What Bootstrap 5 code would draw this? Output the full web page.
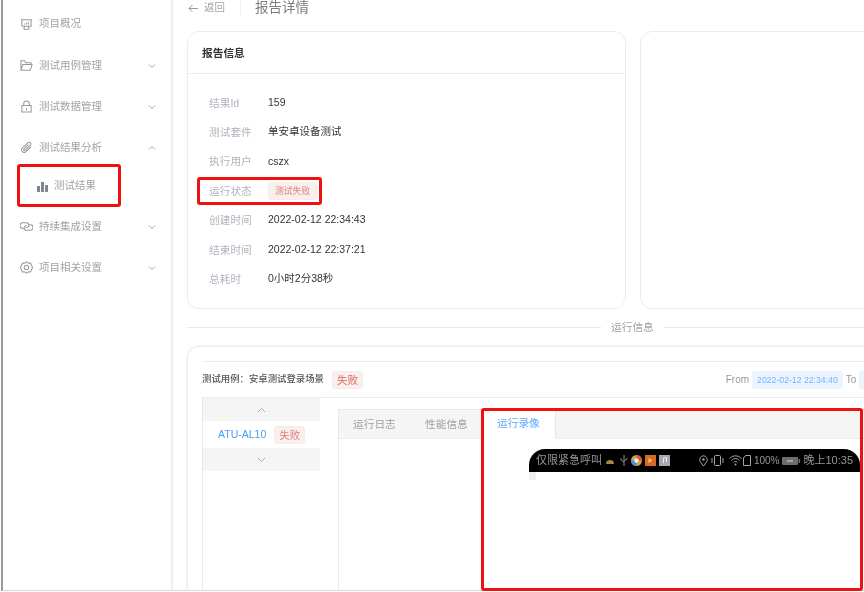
<!DOCTYPE html>
<html lang="zh-CN">
<head>
<meta charset="utf-8">
<title>报告详情</title>
<link href="https://cdn.jsdelivr.net/npm/bootstrap@5.3.0/dist/css/bootstrap.min.css" rel="stylesheet">
<style>
html,body{height:592px;overflow:hidden;background:#fff}
body{font-family:"Liberation Sans","Noto Sans CJK SC",sans-serif;font-size:11px;color:#333;position:relative}
.app-shell{height:591px;width:863px;margin-left:1px;border-bottom:1px solid #d8d8d8;border-left:2px solid #999;overflow:hidden;filter:blur(.3px)}
.side-nav{width:170px;flex:none;border-right:2px solid #efefef;padding-top:3px;color:#a2a2a2}
.nav-entry{height:41px;padding-left:17px;padding-right:15px;gap:6px;font-size:10.5px}
.nav-entry.first-entry{height:42px}
.nav-entry.sub-entry{height:36px;padding-left:34px;margin-bottom:2px}
.nav-entry svg.ico{width:13px;height:13px;flex:none;stroke:#999;fill:none;stroke-width:1.1}
.nav-entry .chev{width:8px;height:8px;flex:none;stroke:#a8a8a8;fill:none;stroke-width:1}
.main-area{width:691px;flex:none;padding-left:14px;overflow:hidden}
.crumb{height:31px;padding-bottom:15px;color:#a5a5a5;font-size:10.5px}
.crumb-arrow{margin:0 6px 0 1px}
.crumb-title{font-size:13.5px;color:#7c7c7c;padding-left:14px;margin-left:15px;border-left:1px solid #eee;line-height:14px}
.panel-box{border:1px solid #ececec;border-radius:12px;background:#fff;flex:none}
.info-panel{width:439px;height:278px}
.blank-panel{width:240px;height:278px;margin-left:14px}
.panel-head{height:42px;padding:1px 0 0 14px;font-weight:700;font-size:10.7px;color:#333;border-bottom:1px solid #eee}
.info-list{padding:14px 0 0 21px}
.info-line{height:29.4px}
.info-key{width:59px;color:#aeb4bc;font-size:10.7px}
.info-val{font-size:10.5px;color:#333}
.chip-red{background:#f9f0ee;color:#e0807b;border:1px solid #f6ebe8;border-radius:3px;font-size:8.8px;line-height:16px;padding:0 6px}
.chip-lg{padding:0 4px;font-size:10.5px;line-height:16px}
.split-rule{height:37px;padding-bottom:1px;color:#a0a0a0;font-size:10.7px}
.split-rule::before,.split-rule::after{content:"";height:1px;background:#e8e8e8;flex:none}
.split-rule::before{width:414px;margin-right:10px}
.split-rule::after{flex:1;margin-left:10px}
.run-panel{width:778px;height:260px;padding:14px 14px 0;box-shadow:0 0 3px #e9e9e9}
.case-bar{height:37px;border-top:1px solid #eee;border-bottom:1px solid #eee;font-size:9.4px;color:#555;font-weight:500}
.chip-blue{background:#ecf5ff;color:#6db3fb;border-radius:3px;font-size:8.7px;line-height:18px;padding:0 5px;font-weight:400;white-space:nowrap}
.from-to{margin-left:auto;color:#999;font-size:10px;gap:3px;font-weight:400}
.case-body{align-items:flex-start}
.device-col{width:118px;height:200px;flex:none;border-left:1px solid #e8e8e8}
.dev-step{height:23px;background:#f5f5f5}
.dev-step svg{width:9px;height:6px;stroke:#aaa;fill:none;stroke-width:1}
.dev-item{height:27px;gap:8px;padding-left:15px;color:#4a9ff5;font-size:10.5px}
.tab-box{margin:11px 0 0 18px;width:560px;height:190px;border-left:1px solid #e8e8e8;border-top:1px solid #e8e8e8}
.tab-strip{height:29px;background:#f5f5f5;border-bottom:1px solid #eee;font-size:10.7px;color:#a0a0a0}
.tab-item{padding:0 14px;width:72px;white-space:nowrap}
.tab-item.is-active{width:73px;background:#fff;color:#5aa9f8;border-right:1px solid #e6e6e6;border-bottom:1px solid #fff;height:29px}
.video-pane{padding:10px 0 0 190px}
.phone-bar{width:331px;height:23px;background:#000;border-radius:16px 16px 0 0;color:#979797;font-size:11px;padding:0 7px;white-space:nowrap;gap:3px}
.phone-stub{width:7px;height:8px;background:#f0f0f0}
.bar-ico{flex:none}
.nudge-a{margin-left:2px}
.nudge-b{margin-left:-2px}
.pct-text{font-size:10px}
.mark-box{position:absolute;border:3px solid #f01010;border-radius:3px;pointer-events:none}
.mark-a{left:17px;top:164px;width:104px;height:43px}
.mark-b{left:197px;top:177px;width:125px;height:28px}
.mark-c{left:481px;top:408px;width:382px;height:183px}
</style>
</head>
<body>
<div class="app-shell d-flex">
  <aside class="side-nav">
    <div class="nav-entry first-entry d-flex align-items-center">
      <svg class="ico" viewBox="0 0 14 14"><path d="M1 2h12M2 2v7h10V2M5 9l-1 3M9 9l1 3M4 12h6M5 7V6M7 7V5M9 7V4"/></svg><span>项目概况</span>
    </div>
    <div class="nav-entry d-flex align-items-center">
      <svg class="ico" viewBox="0 0 14 14"><path d="M1 12V2h4l1 2h6v2M1 12l2-6h10l-2 6z"/></svg><span class="flex-grow-1">测试用例管理</span>
      <svg class="chev" viewBox="0 0 8 8"><path d="M1 2.500l3 3 3-3"/></svg>
    </div>
    <div class="nav-entry d-flex align-items-center">
      <svg class="ico" viewBox="0 0 14 14"><path d="M2 6h10v7H2zM4 6V4a3 3 0 0 1 6 0v2M7 9v2"/></svg><span class="flex-grow-1">测试数据管理</span>
      <svg class="chev" viewBox="0 0 8 8"><path d="M1 2.500l3 3 3-3"/></svg>
    </div>
    <div class="nav-entry d-flex align-items-center">
      <svg class="ico" viewBox="0 0 14 14"><path d="M12 6l-5.500 5.500a2.700 2.700 0 0 1-4-4L8.500 2a1.800 1.800 0 0 1 2.700 2.500L5.500 10a.9.9 0 0 1-1.300-1.300L9 4"/></svg><span class="flex-grow-1">测试结果分析</span>
      <svg class="chev" viewBox="0 0 8 8"><path d="M1 5.500l3-3 3 3"/></svg>
    </div>
    <div class="nav-entry sub-entry d-flex align-items-center">
      <svg width="11" height="11" viewBox="0 0 11 11"><path fill="#7f8690" d="M0 5h3v6H0zM4 1h3v10H4zM8 4h3v7H8z"/></svg><span class="flex-grow-1">测试结果</span>
    </div>
    <div class="nav-entry d-flex align-items-center">
      <svg class="ico" viewBox="0 0 14 14"><path d="M4 9H3a2.500 2.500 0 0 1 0-6h4a2.500 2.500 0 0 1 2.500 2.500 2.500 2.500 0 0 1-2.500 2.500H6M10 5h1a2.500 2.500 0 0 1 0 6H7a2.500 2.500 0 0 1-2.500-2.500A2.500 2.500 0 0 1 7 6"/></svg><span class="flex-grow-1">持续集成设置</span>
      <svg class="chev" viewBox="0 0 8 8"><path d="M1 2.500l3 3 3-3"/></svg>
    </div>
    <div class="nav-entry d-flex align-items-center">
      <svg class="ico" viewBox="0 0 14 14"><path d="M7 1l2 1.300 2.300-.2 1 2.200L13.500 7l-1.200 2.700-1 2.200-2.300-.2L7 13l-2-1.300-2.300.2-1-2.200L.5 7l1.200-2.700 1-2.200 2.300.2z"/><circle cx="7" cy="7" r="2.400"/></svg><span class="flex-grow-1">项目相关设置</span>
      <svg class="chev" viewBox="0 0 8 8"><path d="M1 2.500l3 3 3-3"/></svg>
    </div>
  </aside>
  <main class="main-area">
    <div class="crumb d-flex align-items-center">
      <svg class="crumb-arrow" width="10" height="9" viewBox="0 0 10 9"><path d="M4.500 1L1 4.500 4.500 8M1 4.500h9" fill="none" stroke="#999" stroke-width="1"/></svg>
      <span>返回</span>
      <span class="crumb-title">报告详情</span>
    </div>
    <div class="d-flex">
      <section class="panel-box info-panel">
        <div class="panel-head d-flex align-items-center">报告信息</div>
        <div class="info-list">
          <div class="info-line d-flex align-items-center"><span class="info-key">结果Id</span><span class="info-val">159</span></div>
          <div class="info-line d-flex align-items-center"><span class="info-key">测试套件</span><span class="info-val">单安卓设备测试</span></div>
          <div class="info-line d-flex align-items-center"><span class="info-key">执行用户</span><span class="info-val">cszx</span></div>
          <div class="info-line d-flex align-items-center"><span class="info-key">运行状态</span><span class="chip-red">测试失败</span></div>
          <div class="info-line d-flex align-items-center"><span class="info-key">创建时间</span><span class="info-val">2022-02-12 22:34:43</span></div>
          <div class="info-line d-flex align-items-center"><span class="info-key">结束时间</span><span class="info-val">2022-02-12 22:37:21</span></div>
          <div class="info-line d-flex align-items-center"><span class="info-key">总耗时</span><span class="info-val">0小时2分38秒</span></div>
        </div>
      </section>
      <section class="panel-box blank-panel"></section>
    </div>
    <div class="split-rule d-flex align-items-center"><span>运行信息</span></div>
    <section class="panel-box run-panel">
      <div class="case-bar d-flex align-items-center">
        <span class="me-2">测试用例：安卓测试登录场景</span>
        <span class="chip-red chip-lg">失败</span>
        <span class="from-to d-flex align-items-center">From <span class="chip-blue">2022-02-12 22:34:40</span> To <span class="chip-blue">2022-02-12 22:37:21</span></span>
      </div>
      <div class="case-body d-flex">
        <div class="device-col">
          <div class="dev-step d-flex align-items-center justify-content-center"><svg viewBox="0 0 9 6"><path d="M1 5l3.500-3.500L8 5"/></svg></div>
          <div class="dev-item d-flex align-items-center"><span>ATU-AL10</span><span class="chip-red chip-lg">失败</span></div>
          <div class="dev-step d-flex align-items-center justify-content-center"><svg viewBox="0 0 9 6"><path d="M1 1l3.500 3.500L8 1"/></svg></div>
        </div>
        <div class="tab-box">
          <div class="tab-strip d-flex align-items-center">
            <span class="tab-item">运行日志</span>
            <span class="tab-item">性能信息</span>
            <span class="tab-item is-active d-flex align-items-center">运行录像</span>
          </div>
          <div class="video-pane">
            <div class="phone-bar d-flex align-items-center">
              <span>仅限紧急呼叫</span>
              <svg class="bar-ico" width="10" height="8" viewBox="0 0 10 8"><path d="M1 7a4 4 0 0 1 8 0z" fill="#a08a3a"/></svg>
              <svg class="bar-ico nudge-a" width="8" height="11" viewBox="0 0 8 11"><path d="M4 0v11M1 3v2l3 2M7 3v1L4 6" fill="none" stroke="#8f8f8f"/></svg>
              <svg class="bar-ico" width="11" height="11" viewBox="0 0 11 11"><circle cx="5.500" cy="5.500" r="5.500" fill="#d9a036"/><path d="M5.500 0a5.500 5.500 0 0 1 5.500 5.500H5.500z" fill="#d5553e"/><path d="M0 5.500a5.500 5.500 0 0 0 5.500 5.500V5.500z" fill="#4a8fd6"/><circle cx="5.500" cy="5.500" r="2.200" fill="#eee"/></svg>
              <svg class="bar-ico" width="11" height="11" viewBox="0 0 11 11"><rect width="11" height="11" fill="#d96a22"/><path d="M3.500 3l4 2.500-4 2.500z" fill="#f2c66d"/></svg>
              <svg class="bar-ico" width="11" height="11" viewBox="0 0 11 11"><rect width="11" height="11" fill="#a9a6b8"/><path d="M4.500 8V3l3-.5v4.500" fill="none" stroke="#eee"/></svg>
              <span class="flex-grow-1"></span>
              <svg class="bar-ico" width="9" height="12" viewBox="0 0 9 12"><path d="M4.500 11L1.200 6.500a3.800 3.800 0 1 1 6.600 0z" fill="none" stroke="#a5a5a5"/><circle cx="4.500" cy="4.500" r="1.200" fill="#a5a5a5"/></svg>
              <svg class="bar-ico" width="13" height="11" viewBox="0 0 13 11"><rect x="3.500" y=".5" width="6" height="10" rx="1" fill="none" stroke="#a5a5a5"/><path d="M1 3v5M12 3v5" stroke="#a5a5a5"/></svg>
              <svg class="bar-ico nudge-a" width="13" height="11" viewBox="0 0 13 11"><path d="M.5 3.500a8 8 0 0 1 12 0M2.500 5.500a5 5 0 0 1 8 0M4.500 7.500a2.500 2.500 0 0 1 4 0" fill="none" stroke="#a5a5a5"/><circle cx="6.500" cy="9.500" r="1" fill="#a5a5a5"/></svg>
              <svg class="bar-ico nudge-b" width="8" height="11" viewBox="0 0 8 11"><path d="M2.500.5h5v10h-7V3z" fill="none" stroke="#a5a5a5"/></svg>
              <span class="pct-text">100%</span>
              <svg class="bar-ico" width="18" height="8" viewBox="0 0 18 8"><rect width="16" height="8" rx="1" fill="#6d6d6d"/><rect x="16.500" y="2" width="1.500" height="4" fill="#6d6d6d"/><path d="M5 4h6" stroke="#ddd"/></svg>
              <span>晚上10:35</span>
            </div>
            <div class="phone-stub"></div>
          </div>
        </div>
      </div>
    </section>
  </main>
</div>
<div class="mark-box mark-a"></div>
<div class="mark-box mark-b"></div>
<div class="mark-box mark-c"></div>
<script src="https://cdn.jsdelivr.net/npm/bootstrap@5.3.0/dist/js/bootstrap.bundle.min.js"></script>
</body>
</html>
